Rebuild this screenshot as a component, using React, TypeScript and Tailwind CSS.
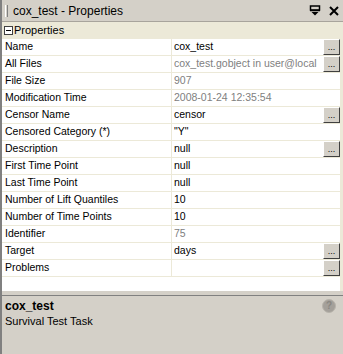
import React from "react";

type Row = {
  label: string;
  value: string;
  readOnly?: boolean;
  button?: boolean;
};

const rows: Row[] = [
  { label: "Name", value: "cox_test", button: true },
  { label: "All Files", value: "cox_test.gobject in user@local", readOnly: true, button: true },
  { label: "File Size", value: "907", readOnly: true },
  { label: "Modification Time", value: "2008-01-24 12:35:54", readOnly: true },
  { label: "Censor Name", value: "censor", button: true },
  { label: "Censored Category (*)", value: "\"Y\"" },
  { label: "Description", value: "null", button: true },
  { label: "First Time Point", value: "null" },
  { label: "Last Time Point", value: "null" },
  { label: "Number of Lift Quantiles", value: "10" },
  { label: "Number of Time Points", value: "10" },
  { label: "Identifier", value: "75", readOnly: true },
  { label: "Target", value: "days", button: true },
  { label: "Problems", value: "", button: true },
];

function EllipsisButton() {
  return (
    <div className="flex h-[16px] w-[17px] shrink-0 items-end justify-center border-t border-l border-t-white border-l-white border-r border-b border-r-[#404040] border-b-[#404040] bg-[#d4d0c8] pb-[2px] text-[9px] leading-none text-black">
      ...
    </div>
  );
}

export default function App() {
  return (
    <div
      className="flex h-[354px] w-[343px] flex-col overflow-hidden border-l-2 border-l-[#808080] bg-[#d4d0c8] text-[10.5px] text-black"
      style={{ fontFamily: '"Liberation Sans", Arial, sans-serif' }}
    >
      {/* title bar */}
      <div className="flex h-[22px] shrink-0 items-center border-b border-b-[#a8a49c] bg-[#d4d0c8] pl-[3px] pr-[4px]">
        <div className="mr-[5px] h-[12px] w-[3px] border-l border-l-white border-r border-r-[#808080]" />
        <span className="flex-1 text-[12px]">cox_test - Properties</span>
        <svg width="12" height="11" viewBox="0 0 12 11" className="mr-[8px]">
          <rect x="1.5" y="1" width="9" height="4" fill="none" stroke="#000" strokeWidth="1.5" />
          <path d="M1 5.5h10" stroke="#000" strokeWidth="1.5" />
          <path d="M2.5 7h7l-3.5 3.5z" fill="#000" />
        </svg>
        <svg width="10" height="10" viewBox="0 0 10 10">
          <path d="M1 1l8 8M9 1l-8 8" stroke="#000" strokeWidth="2" />
        </svg>
      </div>

      {/* grid */}
      <div className="flex flex-1 flex-col border-r-[3px] border-r-[#ece9d8] bg-white">
        <div className="flex h-[17px] shrink-0 items-center bg-[#ece9d8] pl-[2px] text-[11px]">
          <div className="mr-[1px] flex h-[9px] w-[9px] items-center justify-center border border-[#404040] bg-white">
            <div className="h-px w-[5px] bg-black" />
          </div>
          <span>Properties</span>
        </div>
        {rows.map((row) => (
          <div
            key={row.label}
            className="flex h-[17px] shrink-0 border-b border-b-[#ece9d8]"
          >
            <div className="flex w-[170px] shrink-0 items-center overflow-hidden border-r border-r-[#ece9d8] pl-[3px]">
              <span className="whitespace-nowrap">{row.label}</span>
            </div>
            <div className="flex min-w-0 flex-1 items-center pl-[2px]">
              <span
                className={`min-w-0 flex-1 overflow-hidden whitespace-nowrap ${row.readOnly ? "text-[#808080]" : "text-black"}`}
              >
                {row.value}
              </span>
              {row.button ? <EllipsisButton /> : null}
            </div>
          </div>
        ))}
        <div className="flex-1" />
      </div>

      {/* description pane */}
      <div className="h-[4px] shrink-0 bg-[#d4d0c8]" />
      <div className="flex h-[59px] shrink-0 border-t border-t-[#808080] bg-[#d4d0c8] pl-[3px] pr-[3px] pt-[3px]">
        <div className="flex-1">
          <div className="text-[12px] font-bold leading-[15px]">cox_test</div>
          <div className="text-[11px] leading-[14px]">Survival Test Task</div>
        </div>
        <div className="mr-[4px] flex h-[14px] w-[14px] items-center justify-center rounded-full border border-[#b8b4ac] bg-[#a4a09a] text-[10px] font-bold leading-none text-[#8a8782]">
          ?
        </div>
      </div>
    </div>
  );
}
